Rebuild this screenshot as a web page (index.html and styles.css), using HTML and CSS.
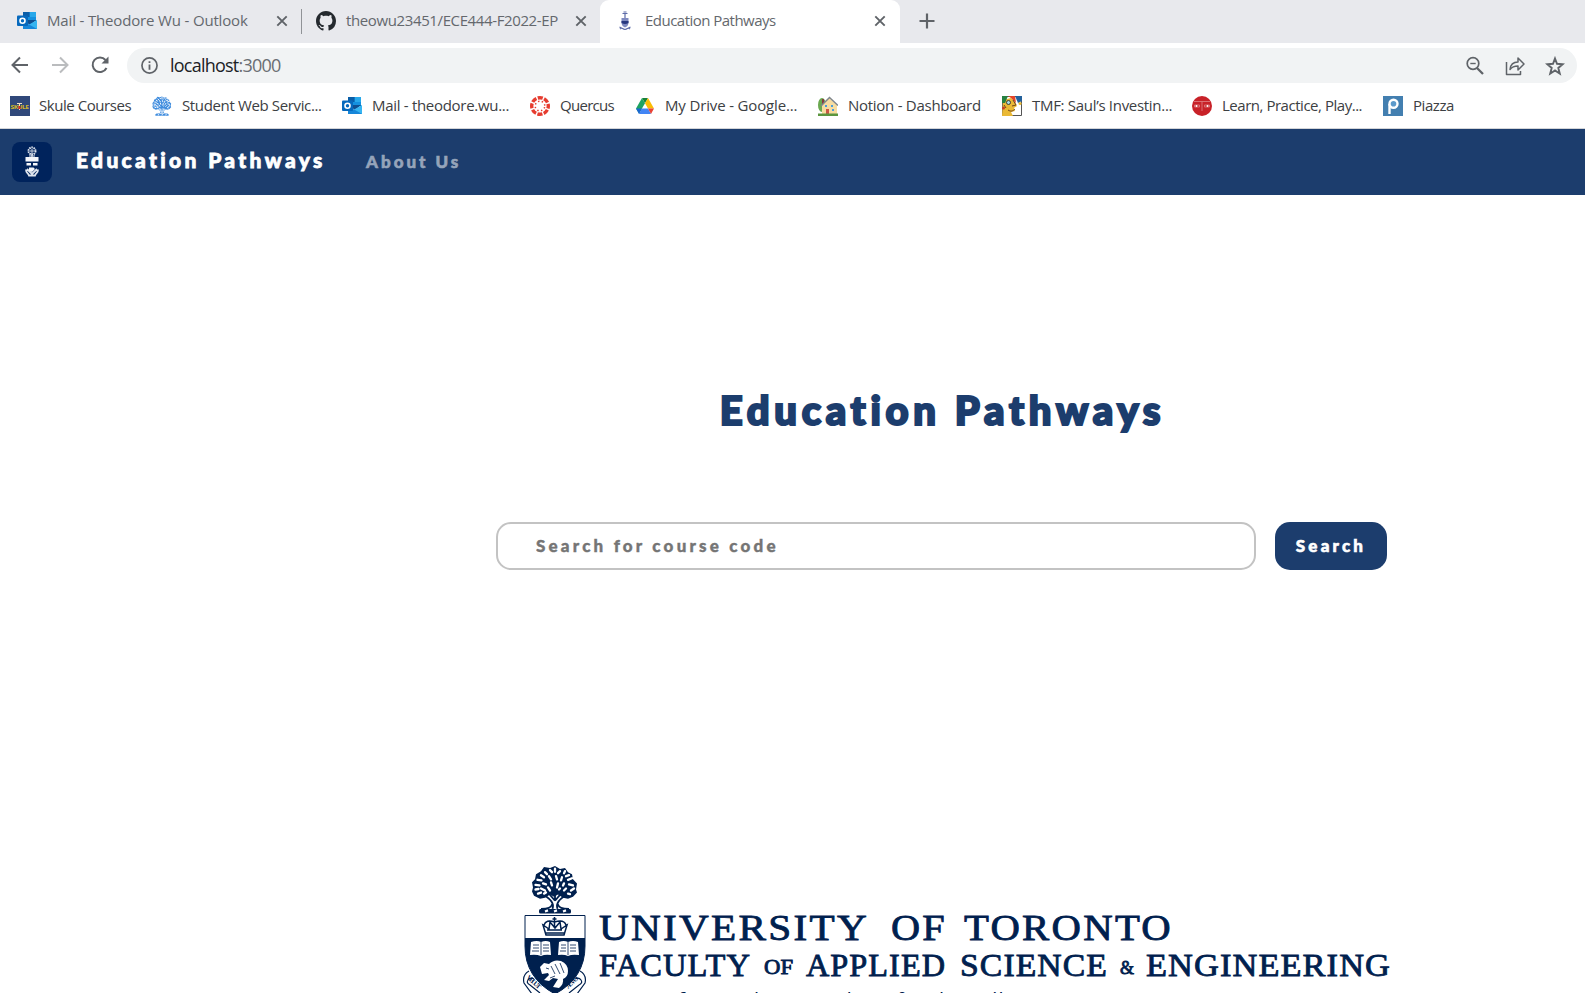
FILE: index.html
```html
<!DOCTYPE html>
<html lang="en">
<head>
<meta charset="utf-8">
<title>Education Pathways</title>
<link rel="stylesheet" href="styles.css">
</head>
<body>
<svg class="defs" width="0" height="0">
  <symbol id="outlook" viewBox="0 0 20 20">
    <path fill="#1490df" d="M6 1h13v9H6z"/><path fill="#0a5ea8" d="M6 1h6.500v5H6z"/><path fill="#28a8ea" d="M13 1h6v5h-6z"/><path fill="#0f4f91" d="M6 9h13.500L13 14z"/><path fill="#36b5f1" d="M20 9v9H6l7-5z"/><path fill="#1686d9" d="M6 10l14 8H6z"/>
    <rect fill="#0669bd" y="4.500" width="11" height="10.500" rx="1"/><circle cx="5.500" cy="9.800" r="2.500" fill="none" stroke="#fff" stroke-width="1.600"/>
  </symbol>
  <symbol id="close" viewBox="0 0 12 12"><path d="M1.300 1.300l9.400 9.400M10.700 1.300l-9.400 9.400" stroke="#5f6368" stroke-width="1.900"/></symbol>
  <symbol id="tree" viewBox="0 0 48 48">
    <g fill="none" stroke="currentColor" stroke-width="1.800" stroke-linejoin="round">
      <path d="M21.500 43c2-6-2-9-9-14M26.500 43c-2-6 2-9 9-14M24 24v11M24 35l6-7M24 35l-6-7M10 43c7 0 10-1 11.500-5M38 43c-7 0-10-1-11.500-5"/>
    </g>
    <path fill="currentColor" d="M19 3l5-2 5 3 5-1 3 4 4 2 1 5 4 4-1 6 1 3-4 4-5 2-5-1-5-3-4 2-4-2-5 3-5 1-6-3-2-4 1-4-1-5 3-3 1-5 5-3 3-4z"/>
    <g fill="none" stroke="#fff" stroke-width="2.300" stroke-linecap="round">
      <path d="M19 5l2 2M24 3.500v3M29 6l-2 2M14 7l2 2M34 6l-1 2M38 10l-3 1M10 10l3 2M6.500 14.500l4 .5M18 11l2 3M25 11l1 3M31 12l-1 3M37 14.500l4-1.500M4.500 19.500l4 .5M12 18l3 1M20 17l1 3M27 18l-1 4M33 18l-1 2M38 19l4 1M4.500 24l3-.5M10 23l4 2M17 22l2 3M29 23l-1 1M35 23l-2 2M43 23l-3 2M7 28l3-1M13 28l2-1M37 28l2 .5"/>
    </g>
    <rect x="8" y="43" width="32" height="4.500" rx="1.500" fill="currentColor"/><path d="M14 45.500l3-1M23 45.500l3-1M32 45.500l3-1" stroke="#fff" stroke-width="2.200"/>
  </symbol>
</svg>

<header class="browser">
  <div class="tabs">
    <div class="tab tab-mail"><svg class="ico"><use href="#outlook"/></svg><span class="t-mail">Mail - Theodore Wu - Outlook</span><svg class="x"><use href="#close"/></svg></div>
    <div class="tab tab-git"><svg class="ico" viewBox="0 0 16 16"><path fill="#24292e" d="M8 0C3.580 0 0 3.580 0 8c0 3.540 2.290 6.530 5.470 7.590.4.070.55-.17.55-.38 0-.19-.01-.82-.01-1.490-2.010.37-2.530-.49-2.690-.94-.09-.23-.48-.94-.82-1.130-.28-.15-.68-.52-.01-.53.63-.01 1.080.58 1.230.82.72 1.210 1.870.87 2.330.66.07-.52.28-.87.51-1.070-1.780-.2-3.640-.89-3.640-3.950 0-.87.31-1.590.82-2.150-.08-.2-.36-1.020.08-2.120 0 0 .67-.21 2.200.82.64-.18 1.320-.27 2-.27s1.360.09 2 .27c1.530-1.040 2.200-.82 2.200-.82.44 1.100.16 1.920.08 2.120.51.56.82 1.270.82 2.150 0 3.070-1.870 3.750-3.650 3.950.29.25.54.73.54 1.480 0 1.070-.01 1.930-.01 2.200 0 .21.15.46.55.38A8.010 8.010 0 0016 8c0-4.420-3.580-8-8-8z"/></svg><span class="t-git">theowu23451/ECE444-F2022-EP</span><svg class="x"><use href="#close"/></svg></div>
    <div class="tab tab-active"><svg class="ico" viewBox="0 0 20 20"><g fill="none" stroke="#5d6ba8" stroke-width="1.200"><path d="M7.500 2.500h5M8.500 1h3M10 3v4M5 18c2-2 2 0 5 .5 3-.5 3-2.500 5-.5M4.500 16l3 1.500M15.500 16l-3 1.500"/></g><path d="M6.500 7h7v5q-.5 3.500-3.500 4.500-3-1-3.500-4.500z" fill="#7f8ac0"/><path d="M6.500 10h7v2q-3.500 2-7 0z" fill="#27377e"/></svg><span class="t-edu">Education Pathways</span><svg class="x"><use href="#close"/></svg></div>
    <svg class="plus" viewBox="0 0 16 16"><path d="M8 .5v15M.5 8h15" stroke="#5f6368" stroke-width="2.200"/></svg>
  </div>

  <div class="toolbar">
    <svg class="nav" viewBox="0 0 18 18"><path d="M17 9H2M9 1.500L1.500 9 9 16.500" fill="none" stroke="#5f6368" stroke-width="2"/></svg>
    <svg class="nav" viewBox="0 0 18 18"><path d="M1 9h15M9 1.500L16.500 9 9 16.500" fill="none" stroke="#babcbe" stroke-width="2"/></svg>
    <svg class="nav" viewBox="0 0 18 18"><path d="M15.500 12A7.300 7.300 0 1 1 14.500 4" fill="none" stroke="#5f6368" stroke-width="2"/><path d="M17.500.5v7h-7z" fill="#5f6368"/></svg>
    <div class="omnibox">
      <svg class="info" viewBox="0 0 16 16"><circle cx="8" cy="8" r="7.100" fill="none" stroke="#5f6368" stroke-width="1.600"/><path d="M8 7v5M8 4v1.700" stroke="#5f6368" stroke-width="1.700"/></svg>
      <span class="url">localhost<i>:3000</i></span>
      <svg class="act" viewBox="0 0 20 20"><g fill="none" stroke="#5f6368"><circle cx="8" cy="7.500" r="5.800" stroke-width="1.700"/><path d="M12 12l6 6" stroke-width="2.300"/><path d="M5.300 7.500h5.400" stroke-width="1.400"/></g></svg>
      <svg class="act" viewBox="0 0 20 20"><path d="M1.500 6v12.500h14V15M5 13.500c.5-5 3.500-7.500 8-7.500V2l6 6-6 6v-4c-4 0-6 .8-8 3.500z" fill="none" stroke="#5f6368" stroke-width="1.500" stroke-linejoin="round"/></svg>
      <svg class="act" viewBox="0 0 20 20"><path d="M10 2.500l2 5.300 5.800.4-4.500 3.700 1.500 5.800-4.800-3.200-4.800 3.200 1.500-5.800-4.500-3.700 5.800-.4z" fill="none" stroke="#5f6368" stroke-width="1.900"/></svg>
    </div>
  </div>

  <nav class="bookmarks">
    <div class="bm b1"><svg class="ico" viewBox="0 0 20 20"><path fill="#30487a" d="M0 0h20v20H0z"/><text class="skule" x=".5" y="12.500" textLength="18" lengthAdjust="spacingAndGlyphs">SKULE</text><path d="M7 7.500h5M9.500 8v6" stroke="#f2dfbf"/><path d="M8.500 10h2v3h-2z" fill="#dc2626"/></svg><span>Skule Courses</span></div>
    <div class="bm b2"><svg class="ico blue"><use href="#tree"/></svg><span>Student Web Servic...</span></div>
    <div class="bm b3"><svg class="ico"><use href="#outlook"/></svg><span>Mail - theodore.wu...</span></div>
    <div class="bm b4"><svg class="ico" viewBox="0 0 20 20"><circle cx="10" cy="10" r="8.300" fill="none" stroke="#e63c2f" stroke-width="3.400" stroke-dasharray="5.100 1.419" stroke-dashoffset="2.550"/><circle cx="10" cy="10" r="4.800" fill="none" stroke="#e63c2f" stroke-width="1.500" stroke-dasharray="1.400 2.370" stroke-dashoffset="-1.185"/></svg><span>Quercus</span></div>
    <div class="bm b5"><svg class="ico" viewBox="0 0 20 20"><path fill="#188038" d="M7 2h6l-3 5.200z"/><path fill="#1ea362" d="M7 2l3 5.200L4 17.500 1 12.500z"/><path fill="#fbbc04" d="M13 2l6 10.500h-6L10 7.200z"/><path fill="#4285f4" d="M7 12.500h6l3 5.500H4z"/><path fill="#1967d2" d="M1 12.500h6L4 18z"/><path fill="#ea4335" d="M13 12.500h6L16 18z"/></svg><span>My Drive - Google...</span></div>
    <div class="bm b6"><svg class="ico" viewBox="0 0 20 20"><ellipse cx="4" cy="9" rx="4" ry="7" fill="#6aa84f"/><path fill="#883a40" d="M4 3h2v5H4z"/><path fill="#f8dda0" d="M4 9l7-7 8 7v9H4z"/><path d="M3 10l8.500-8.500L20 9.500" fill="none" stroke="#80868b" stroke-width="1.500"/><path fill="#c85745" d="M8 13h3v5H8z"/><path fill="#4c9ed9" d="M7 9h2v2H7zM13 9h2v2h-2zM14 13h2v2h-2z"/><path fill="#5b963f" d="M0 17.500h20V20H0z"/></svg><span>Notion - Dashboard</span></div>
    <div class="bm b7"><svg class="ico" viewBox="0 0 20 20"><path fill="#fff" stroke="#555" d="M.5.500h19v19H.5z"/><path fill="#eab935" d="M1 4l8-2 4 4 2 4-3 2 1 3-4 1 2 4H0z"/><path fill="#278142" d="M0 0h6L3 7H0z"/><path fill="#e54527" d="M6 0h7l1 7-5-5z"/><path fill="#23619b" d="M13 0h7v5l-4 2z"/><circle cx="6.500" cy="6.500" r="2" fill="#a7dbe8" stroke="#222" stroke-width=".8"/><circle cx="18" cy="7.500" r="1.500" fill="#eab935"/><path d="M11 4l3 5-4 1M6 14c3 2 5 1 7-1M2 9l2 3" fill="none" stroke="#71451b"/><circle cx="1.500" cy="12" r="1.500" fill="#c63d24"/></svg><span>TMF: Saul’s Investin...</span></div>
    <div class="bm b8"><svg class="ico" viewBox="0 0 20 20"><circle cx="10" cy="10" r="10" fill="#c82128"/><path d="M2 5.500h16M2.500 9h5M12.500 9h5M2.500 9v2h5V9M12.500 9v2h5V9M10 5.500V15" fill="none" stroke="#dd777b" stroke-width=".9"/><circle cx="4.500" cy="10" r="1" fill="#fff"/><circle cx="15.500" cy="10" r="1" fill="#fff"/></svg><span>Learn, Practice, Play...</span></div>
    <div class="bm b9"><svg class="ico" viewBox="0 0 20 20"><path fill="#437fb0" d="M0 0h20v20H0z"/><path d="M6.500 18V8" stroke="#fff" stroke-width="2.400"/><circle cx="10.500" cy="7.800" r="4" fill="#5c9acb" stroke="#fff" stroke-width="2.400"/></svg><span>Piazza</span></div>
  </nav>
</header>

<nav class="sitebar">
  <svg class="brand-logo" viewBox="0 0 40 40"><rect width="40" height="40" rx="8" fill="#00235c"/><g fill="none" stroke="#dfe5ee"><circle cx="20" cy="9" r="3.500" stroke-width="2" stroke-dasharray="1.500 .7"/><circle cx="20" cy="9" r="1.200"/><path d="M20 11v4M17 14h6" stroke-width="1.200"/><path d="M14 27.500c0 4 2 3 3 6h6c1-3 3-2 3-6M15 27l5 5 5-5" stroke-width="1.800"/></g><path fill="#f4f6fa" d="M13.500 15h13v4.500h-13zM14.500 21h4.500v2.500h-4.500zM21 21h4.500v2.500H21zM17 25.500h4.500l1.500 1.500-3 3-3-1z"/></svg>
  <span class="brand">Education Pathways</span>
  <span class="about">About Us</span>
</nav>

<main class="page">
  <h1 class="title">Education Pathways</h1>
  <form class="search">
    <input class="field" type="text" placeholder="Search for course code">
    <button class="go" type="button">Search</button>
  </form>
  <svg class="lockup" viewBox="0 0 880 133">
    <svg x="11" y="5" width="48" height="49" viewBox="0 0 48 48" preserveAspectRatio="none"><use href="#tree"/></svg>
    <path d="M5 55.500h60V86q0 32-30 48-30-16-30-48z" fill="#fff" stroke="#00204e"/>
    <path d="M5 78h60v8q0 32-30 48Q5 118 5 86z" fill="#00204e"/>
    <g fill="none" stroke="#00204e" stroke-width="1.500"><path d="M26 75l-3-10 6 4 1-7 5 6 5-6 1 7 6-4-3 10zM25 73h19M24 65q2-6 10.500-3Q44 59 46 65M34.500 57v11M32.500 59h4M27 70h15"/></g>
    <path d="M11 82q6-2 10 0 5-2 9 0l1 13q-6-1-10 1-5-2-11-1zM39 82q5-2 9 0 5-2 10 0l1 13q-7-1-11 1-4-2-10-1z" fill="#fff"/>
    <path d="M21 82v13M48 82v13M13 85h6M13 88h6M12 91h7M23 85h6M23 88h6M23 91h6M41 85h5M41 88h5M40 91h6M50 85h6M50 88h6M50 91h6" stroke="#00204e" stroke-width=".8"/>
    <path d="M20 107l4-4 5 1q5-5 12-3 7 3 7 10 0 6-5 8 1 5-4 9l-6-1 5-8-5-1-4 3-5-1 5-5-1-2-6 1z" fill="#fff"/><path d="M31 106l4 8M35 104l5 10M40 103l4 10M26 108l3 1M30 118l5-2" stroke="#00204e" stroke-width=".8"/>
    <path d="M9 111q-7 4-5 12l8 11M14 119q-4-2-6 1-2 3 2 5l10 8M60 111q7 4 5 12l-8 11M55 119q4-2 6 1 2 3-2 5l-10 8" fill="none" stroke="#00204e" stroke-width="1.200"/>
    <g class="motto"><text transform="translate(6 118) rotate(42)" textLength="17">VELUT</text><text transform="translate(48 129) rotate(-42)" textLength="15">ÆVO</text></g>
    <g class="uni">
      <g class="wide" font-size="36"><text x="79" y="79.500" textLength="270" lengthAdjust="spacingAndGlyphs">UNIVERSITY</text><text x="371" y="79.500" textLength="56" lengthAdjust="spacingAndGlyphs">OF</text><text x="444" y="79.500" textLength="209" lengthAdjust="spacingAndGlyphs">TORONTO</text></g>
      <g class="mid" font-size="31"><text x="79" y="115.500" textLength="152" lengthAdjust="spacingAndGlyphs">FACULTY</text><text x="286" y="115.500" textLength="140" lengthAdjust="spacingAndGlyphs">APPLIED</text><text x="440" y="115.500" textLength="148" lengthAdjust="spacingAndGlyphs">SCIENCE</text><text x="626" y="115.500" textLength="245" lengthAdjust="spacingAndGlyphs">ENGINEERING</text></g>
      <text x="244" y="114" font-size="20" textLength="29" lengthAdjust="spacingAndGlyphs">OF</text><text x="600" y="114" font-size="18" textLength="13">&amp;</text>
    </g>
    <text class="centre" x="82" y="147" textLength="598">Centre for Analytics and Artificial Intelligence Engineering</text>
  </svg>
</main>
</body>
</html>
```

FILE: styles.css
```css
* { box-sizing: border-box; }
html, body { margin: 0; height: 100%; overflow: hidden; background: #fff; }
body { display: flex; flex-direction: column; font-family: "Open Sans", "Noto Sans", sans-serif; }
svg { display: block; flex: none; }
.defs { position: absolute; }
.ico { width: 20px; height: 20px; }

.browser { flex: none; height: 129px; border-bottom: 1px solid #d3d5d8; }
.tabs { display: flex; height: 43px; background: #e8e9ed; color: #64686d; font-size: 15px; }
.tab { display: flex; align-items: center; height: 42px; white-space: nowrap; }
.tab .x { width: 12px; height: 12px; margin-left: auto; }
.tab span { margin-left: 10px; padding-bottom: 2px; }
.tab-mail { width: 302px; padding: 0 14px 0 17px; background: linear-gradient(#909397, #909397) right 9px / 1px 25px no-repeat; }
.tab-git { width: 298px; padding: 0 13px 0 14px; }
.tab-active { width: 300px; height: 43px; padding: 0 14px 1px 15px; background: #fff; border-radius: 9px 9px 0 0; }
.plus { width: 16px; height: 16px; margin: 13px 0 0 19px; }
.t-mail { letter-spacing: -.16px; }
.t-git { letter-spacing: -.38px; }
.t-edu { letter-spacing: -.52px; }

.toolbar { display: flex; align-items: center; height: 44px; padding: 0 8px 0 11px; gap: 22px; }
.nav { width: 18px; height: 18px; }
.omnibox { display: flex; flex: 1; align-items: center; height: 35px; margin: 1px 0 0 -4px; padding: 0 12px 0 14px; border-radius: 18px; background: #f1f3f4; }
.info { width: 17px; height: 17px; }
.url { flex: 1; margin-left: 12px; padding-bottom: 2px; font-size: 18px; letter-spacing: -.77px; color: #202124; }
.url i { font-style: normal; color: #6a6e73; }
.act { width: 20px; height: 20px; margin-left: 20px; }

.bookmarks { display: flex; height: 38px; align-items: center; padding-left: 10px; color: #3c4043; font-size: 15px; }
.bm { display: flex; flex: none; align-items: center; gap: 10px; white-space: nowrap; }
.bm span { padding-bottom: 2px; }
.b1 { width: 142px; gap: 9px; letter-spacing: -.45px; }
.b2 { width: 190px; letter-spacing: -.36px; }
.b3 { width: 188px; letter-spacing: -.3px; }
.b4 { width: 105px; letter-spacing: -.7px; }
.b5 { width: 183px; letter-spacing: -.15px; }
.b6 { width: 184px; letter-spacing: -.27px; }
.b7 { width: 190px; letter-spacing: -.3px; }
.b8 { width: 191px; letter-spacing: -.47px; }
.b9 { letter-spacing: -.45px; }
.blue { color: #408dde; }
.skule { fill: #d5b929; font: bold 6px "Open Sans", sans-serif; }

.sitebar { display: flex; flex: none; align-items: center; height: 66px; padding-left: 12px; background: #1c3d6d; }
.sitebar, .title, .field, .go { font-family: Lato, "Open Sans", sans-serif; font-weight: 900; }
.brand-logo { width: 40px; height: 40px; }
.brand { flex: none; width: 314px; padding: 0 0 6px 24px; color: #fff; font-size: 21px; letter-spacing: 3.340px; white-space: nowrap; -webkit-text-stroke: .8px #fff; }
.about { padding-bottom: 1px; color: #95a4ba; font-size: 17px; letter-spacing: 3px; -webkit-text-stroke: .6px #95a4ba; }

.page { display: flex; flex: 1; flex-direction: column; min-height: 0; align-items: flex-start; padding: 185px 0 0 496px; }
.title { width: 891px; margin: 0; padding-left: 2px; color: #1c3d6d; font-size: 40px; line-height: 60px; letter-spacing: 4.700px; text-align: center; -webkit-text-stroke: 2.200px #1c3d6d; }
.search { display: flex; gap: 19px; margin-top: 82px; }
.field { width: 760px; height: 48px; padding: 0 38px 2px; border: 2px solid #c3c3c3; border-radius: 15px; background: #fff; font-family: Lato, "Open Sans", sans-serif; font-size: 17px; letter-spacing: 3.200px; }
.field::placeholder { color: #757575; opacity: 1; -webkit-text-stroke: .4px #757575; }
.go { width: 112px; height: 48px; padding: 0 0 2px; border: 0; border-radius: 15px; background: #1c3d6d; color: #fff; font-size: 17px; letter-spacing: 3.200px; -webkit-text-stroke: .6px #fff; }
.lockup { width: 880px; height: 133px; margin: 290px 0 0 24px; color: #00204e; }
.uni { fill: #00204e; stroke: #00204e; stroke-width: .8px; font-family: "Liberation Serif", serif; }
.wide { letter-spacing: 2px; }
.mid { letter-spacing: 1px; }
.centre { fill: #00204e; font: 20px "Open Sans", sans-serif; }
.motto { fill: #00204e; font: bold 7px "Liberation Serif", serif; }
```
